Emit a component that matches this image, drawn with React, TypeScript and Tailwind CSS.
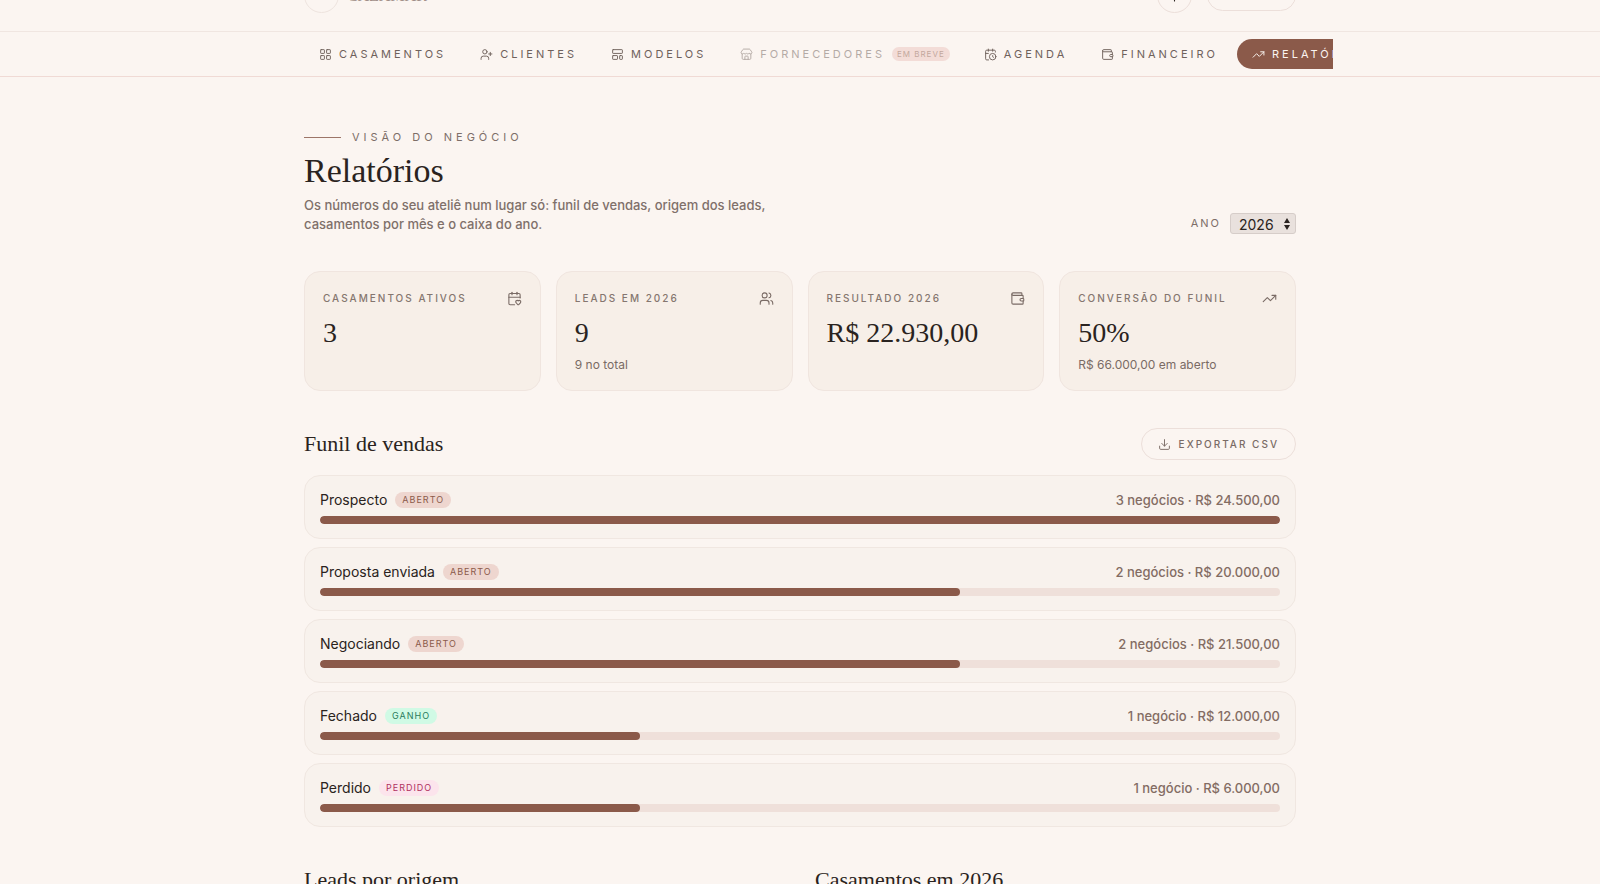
import {
  CalendarClock,
  CalendarHeart,
  Download,
  LayoutGrid,
  LayoutTemplate,
  Store,
  Sun,
  TrendingUp,
  UserPlus,
  Users,
  Wallet,
} from "lucide-react";
import clsx from "clsx";

const nav = [
  { label: "Casamentos", icon: LayoutGrid },
  { label: "Clientes", icon: UserPlus },
  { label: "Modelos", icon: LayoutTemplate },
  { label: "Fornecedores", icon: Store, soon: true },
  { label: "Agenda", icon: CalendarClock },
  { label: "Financeiro", icon: Wallet },
  { label: "Relatórios", icon: TrendingUp, active: true },
];

const stats = [
  { label: "Casamentos ativos", value: "3", icon: CalendarHeart },
  { label: "Leads em 2026", value: "9", hint: "9 no total", icon: Users },
  { label: "Resultado 2026", value: "R$ 22.930,00", icon: Wallet },
  { label: "Conversão do funil", value: "50%", hint: "R$ 66.000,00 em aberto", icon: TrendingUp },
];

const badges = {
  Aberto: "bg-[#eed6cf] text-[#8b5a4a]",
  Ganho: "bg-[#d0fae5] text-[#2a7a5c]",
  Perdido: "bg-[#fce4ec] text-[#b03060]",
};

const stages: { name: string; status: keyof typeof badges; count: number; total: string }[] = [
  { name: "Prospecto", status: "Aberto", count: 3, total: "R$ 24.500,00" },
  { name: "Proposta enviada", status: "Aberto", count: 2, total: "R$ 20.000,00" },
  { name: "Negociando", status: "Aberto", count: 2, total: "R$ 21.500,00" },
  { name: "Fechado", status: "Ganho", count: 1, total: "R$ 12.000,00" },
  { name: "Perdido", status: "Perdido", count: 1, total: "R$ 6.000,00" },
];

const serif = "font-['Liberation_Serif',serif] font-normal text-[#2a2320]";

function Header() {
  return (
    <header className="-mt-10 border-b border-[#f0e6e1]">
      <div className="mx-auto flex max-w-[1066px] items-center justify-between px-[37px] pt-[18px] pb-[18px]">
        <a href="#" className="flex items-center gap-2">
          <span className="size-[35px] rounded-full border border-[#eee4df]" />
          <span className="font-['Liberation_Serif',serif] text-[16px] text-[#a08f88]">CAZAMAR</span>
        </a>
        <div className="flex items-center gap-[15px]">
          <button aria-label="Tema" className="flex size-[35px] items-center justify-center rounded-full border border-[#ecdfda]">
            <Sun className="size-[13px]" />
          </button>
          <button aria-label="Sair" className="h-[31px] w-[89px] rounded-full border border-[#ecdfda]" />
        </div>
      </div>
    </header>
  );
}

function Nav() {
  return (
    <nav className="border-b border-[#f0dad5]">
      <div className="mx-auto flex max-w-[1066px] gap-1 overflow-hidden py-[7px] pl-[37px]">
        {nav.map(({ label, icon: Icon, soon, active }) => (
          <a
            key={label}
            href="#"
            className={clsx(
              "flex h-[30px] shrink-0 items-center gap-[7px] rounded-full px-[15px] text-[11px] tracking-[3px] uppercase",
              active ? "bg-[#8b5a4a] text-[#fbf5f1]" : "text-[#6f615b]",
              soon && "opacity-50"
            )}
          >
            <Icon className="size-[13px]" strokeWidth={1.75} />
            {label}
            {soon && (
              <span className="rounded-full bg-[#ecc4bf] px-[5px] text-[8px] leading-[14px] tracking-[1px] text-[#8b5a4a]">
                Em breve
              </span>
            )}
          </a>
        ))}
      </div>
    </nav>
  );
}

export default function App() {
  return (
    <div className="bg-[#fbf5f1] font-['Inter',sans-serif] text-[#2a2320]">
      <Header />
      <Nav />

      <main className="mx-auto max-w-[1066px] px-[37px] pt-[51px] pb-16">
        <div className="flex items-end justify-between">
          <div>
            <p className="flex items-center gap-[11px] text-[11px] leading-[18px] tracking-[4px] text-[#7d6e68] uppercase">
              <span className="h-px w-[37px] bg-[#9c7568]" />
              Visão do negócio
            </p>
            <h1 className={clsx(serif, "mt-[5px] text-[34px] leading-10")}>Relatórios</h1>
            <p className="mt-[5px] max-w-[490px] text-[13px] leading-[19px] font-medium text-[#7f706a]">
              Os números do seu ateliê num lugar só: funil de vendas, origem dos leads, casamentos por mês e o caixa do ano.
            </p>
          </div>
          <label className="flex items-center gap-[9px] text-[11px] tracking-[2px] text-[#7d6e68] uppercase">
            Ano
            <span className="relative">
              <select className="h-[21px] w-[66px] appearance-none rounded-[3px] border border-[#d6cdc9] bg-[#e9e1dd] pl-2 text-[14px] tracking-normal text-[#2a2320]">
                <option>2026</option>
              </select>
              <svg viewBox="0 0 8 14" className="pointer-events-none absolute top-1 right-[5px] h-[14px] w-2 fill-[#2a2320]">
                <path d="M4 1 7 6H1ZM4 13 1 8h6Z" />
              </svg>
            </span>
          </label>
        </div>

        <div className="mt-[37px] grid grid-cols-4 gap-[15px]">
          {stats.map(({ label, value, hint, icon: Icon }) => (
            <div key={label} className="min-h-[120px] rounded-2xl border border-[#f0e5df] bg-[#f7efe8] px-[18px] pt-[18px]">
              <div className="flex justify-between">
                <p className="text-[10px] leading-4 font-medium tracking-[2px] text-[#85766f] uppercase">{label}</p>
                <Icon className="mt-px size-[15px] text-[#7a6b65]" strokeWidth={1.75} />
              </div>
              <p className={clsx(serif, "mt-[11px] text-[28px] leading-8")}>{value}</p>
              {hint && <p className="mt-2 text-[12px] leading-4 text-[#7a6b65]">{hint}</p>}
            </div>
          ))}
        </div>

        <section className="mt-[37px]">
          <div className="flex items-center justify-between">
            <h2 className={clsx(serif, "text-[22px] leading-7")}>Funil de vendas</h2>
            <button className="flex h-8 items-center gap-2 rounded-full border border-[#ecdfda] px-4 text-[10px] font-medium tracking-[2px] text-[#7a6b65] uppercase">
              <Download className="size-[13px]" strokeWidth={1.75} />
              Exportar CSV
            </button>
          </div>
          <ul className="mt-[15px] space-y-2">
            {stages.map((s) => (
              <li key={s.name} className="rounded-2xl border border-[#f0e7e1] bg-[#f8f2ed] px-[15px] pt-4 pb-[14px]">
                <div className="flex items-center gap-2 text-[14px] leading-4">
                  {s.name}
                  <span className={clsx("rounded-full px-[7px] text-[9px] leading-4 tracking-[1px] uppercase", badges[s.status])}>
                    {s.status}
                  </span>
                  <span className="ml-auto text-[13px] font-medium text-[#836c63]">
                    {s.count} {s.count > 1 ? "negócios" : "negócio"} · {s.total}
                  </span>
                </div>
                <div className="mt-2 h-2 overflow-hidden rounded-full bg-[#efe0da]">
                  <div className="h-full rounded-full bg-[#8b5a4a]" style={{ width: `${(s.count / 3) * 100}%` }} />
                </div>
              </li>
            ))}
          </ul>
        </section>

        <div className="mt-[39px] grid grid-cols-2 gap-[30px]">
          <h2 className={clsx(serif, "text-[22px] leading-7")}>Leads por origem</h2>
          <h2 className={clsx(serif, "text-[22px] leading-7")}>Casamentos em 2026</h2>
        </div>
      </main>
    </div>
  );
}
